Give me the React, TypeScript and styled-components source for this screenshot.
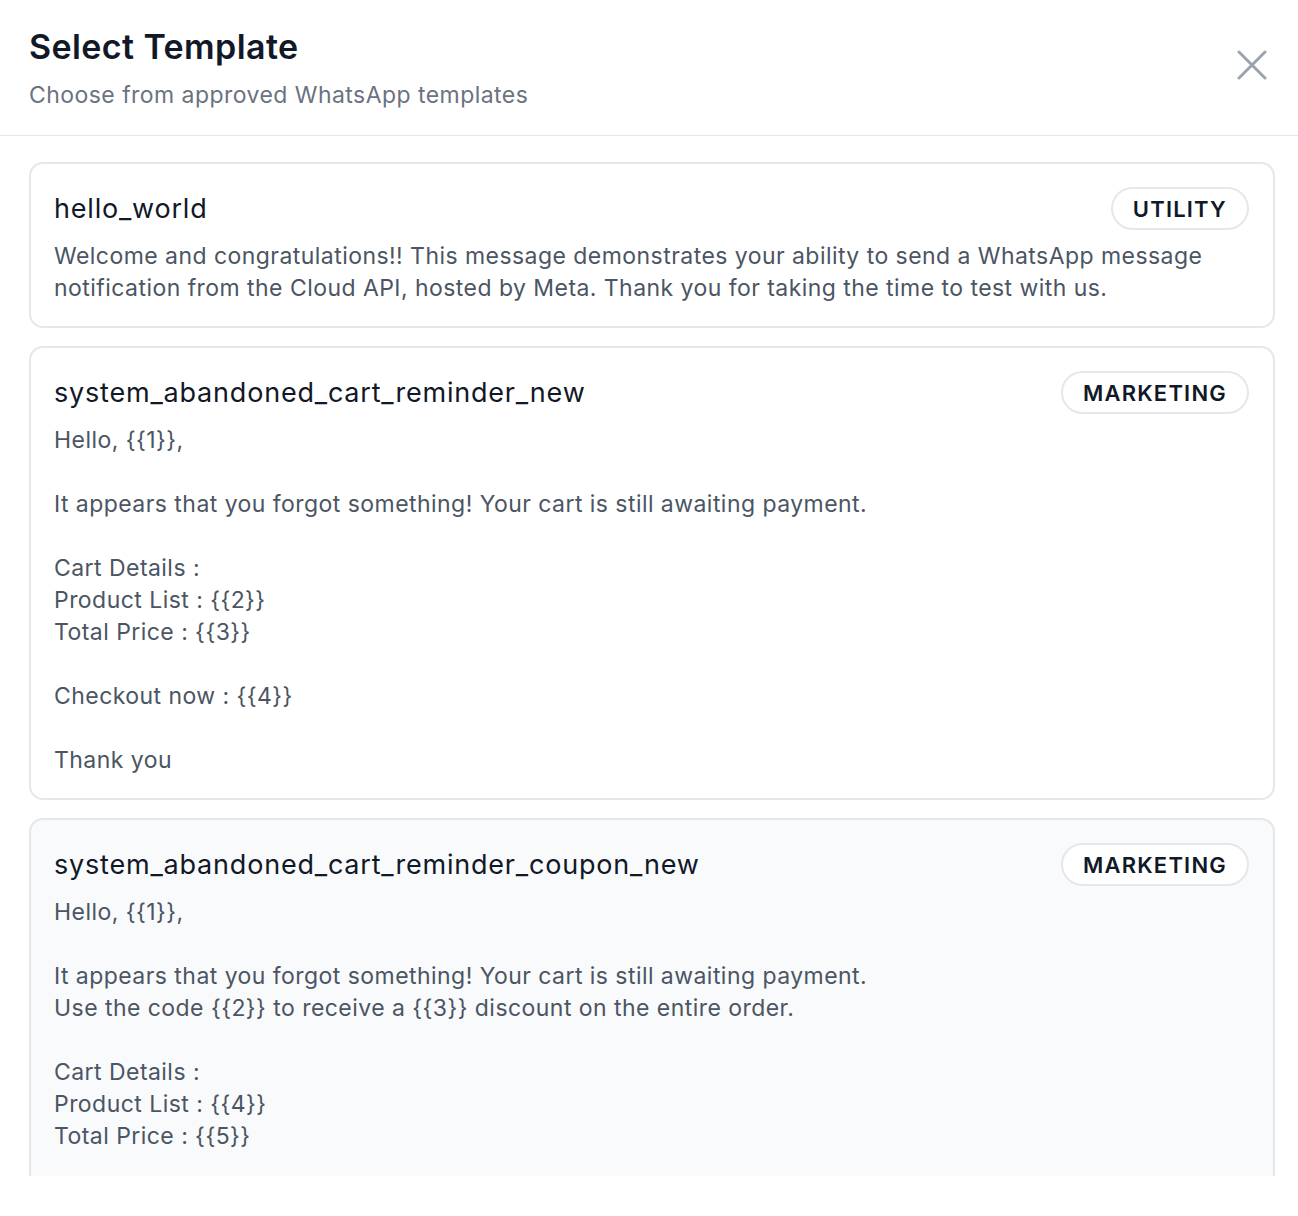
import React from "react";
import styled, { createGlobalStyle } from "styled-components";

interface Template {
  name: string;
  category: string;
  body: string;
  active?: boolean;
}

const templates: Template[] = [
  {
    name: "hello_world",
    category: "UTILITY",
    body:
      "Welcome and congratulations!! This message demonstrates your ability to send a WhatsApp message notification from the Cloud API, hosted by Meta. Thank you for taking the time to test with us.",
  },
  {
    name: "system_abandoned_cart_reminder_new",
    category: "MARKETING",
    body:
      "Hello, {{1}},\n\nIt appears that you forgot something! Your cart is still awaiting payment.\n\nCart Details :\nProduct List : {{2}}\nTotal Price : {{3}}\n\nCheckout now : {{4}}\n\nThank you",
  },
  {
    name: "system_abandoned_cart_reminder_coupon_new",
    category: "MARKETING",
    active: true,
    body:
      "Hello, {{1}},\n\nIt appears that you forgot something! Your cart is still awaiting payment.\nUse the code {{2}} to receive a {{3}} discount on the entire order.\n\nCart Details :\nProduct List : {{4}}\nTotal Price : {{5}}\n\nCheckout now : {{6}}\n\nThank you",
  },
];

const GlobalStyle = createGlobalStyle`
  html, body {
    margin: 0;
    padding: 0;
    background: #ffffff;
  }
  body {
    font-family: Inter, "Noto Sans", sans-serif;
    -webkit-font-smoothing: antialiased;
  }
`;

const Modal = styled.div`
  width: 1298px;
  display: flex;
  flex-direction: column;
  background: #ffffff;
`;

const Header = styled.header`
  height: 136px;
  box-sizing: border-box;
  border-bottom: 1px solid #e5e7eb;
  display: flex;
  align-items: flex-start;
  justify-content: space-between;
  padding: 25px 30px 0 29px;
`;

const Titles = styled.div`
  display: flex;
  flex-direction: column;
  gap: 11px;
`;

const Title = styled.h1`
  margin: 0;
  font-size: 34px;
  line-height: 44px;
  font-weight: 600;
  color: #111827;
  letter-spacing: 0.4px;
`;

const Subtitle = styled.p`
  margin: 0;
  font-size: 23px;
  line-height: 30px;
  color: #6b7280;
  letter-spacing: 0.45px;
`;

const CloseButton = styled.button`
  border: none;
  background: none;
  padding: 0;
  margin-top: 24px;
  width: 32px;
  height: 32px;
  display: flex;
  align-items: center;
  justify-content: center;
  cursor: pointer;
`;

const List = styled.div`
  height: 1040px;
  overflow: hidden;
  box-sizing: border-box;
  padding: 26px 23px 0 29px;
  display: flex;
  flex-direction: column;
  gap: 18px;
`;

const Card = styled.div<{ $active?: boolean }>`
  flex-shrink: 0;
  border: 2px solid #e5e7eb;
  border-radius: 14px;
  background: ${({ $active }) => ($active ? "#f9fafb" : "#ffffff")};
  padding: 23px 24px 22px 23px;
  display: flex;
  flex-direction: column;
  gap: 10px;
`;

const CardHead = styled.div`
  display: flex;
  align-items: center;
  justify-content: space-between;
`;

const Name = styled.div`
  font-size: 27px;
  line-height: 36px;
  color: #111827;
  letter-spacing: 0.8px;
`;

const Badge = styled.span`
  height: 43px;
  box-sizing: border-box;
  border: 2px solid #e5e7eb;
  border-radius: 999px;
  padding: 0 20px;
  display: inline-flex;
  align-items: center;
  font-size: 22px;
  font-weight: 600;
  letter-spacing: 1.2px;
  color: #111827;
  background: #ffffff;
`;

const Body = styled.p`
  margin: 0;
  font-size: 23px;
  line-height: 32px;
  color: #4b5563;
  white-space: pre-line;
  letter-spacing: 0.45px;
`;

function CloseIcon() {
  return (
    <svg width="30" height="30" viewBox="0 0 30 30" fill="none">
      <path d="M2 2 L28 28 M28 2 L2 28" stroke="#9ca3af" strokeWidth="3" strokeLinecap="round" />
    </svg>
  );
}

export default function App() {
  return (
    <>
      <GlobalStyle />
      <Modal>
        <Header>
          <Titles>
            <Title>Select Template</Title>
            <Subtitle>Choose from approved WhatsApp templates</Subtitle>
          </Titles>
          <CloseButton aria-label="Close">
            <CloseIcon />
          </CloseButton>
        </Header>
        <List>
          {templates.map(t => (
            <Card key={t.name} $active={t.active}>
              <CardHead>
                <Name>{t.name}</Name>
                <Badge>{t.category}</Badge>
              </CardHead>
              <Body>{t.body}</Body>
            </Card>
          ))}
        </List>
      </Modal>
    </>
  );
}
